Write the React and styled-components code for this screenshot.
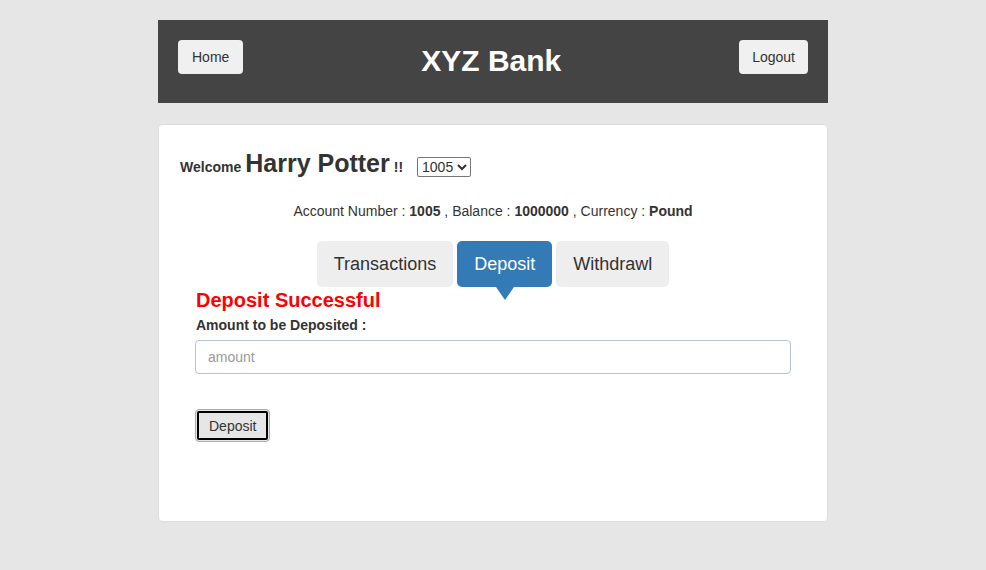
import React from 'react';
import styled, { createGlobalStyle } from 'styled-components';

const GlobalStyle = createGlobalStyle`
  body {
    margin: 0;
    background: #e6e6e6;
    font-family: "Liberation Sans", Arial, sans-serif;
    color: #333;
  }
`;

const Page = styled.div`
  width: 670px;
  margin: 20px auto 0;
  display: flex;
  flex-direction: column;
  gap: 21px;
`;

const Header = styled.header`
  background: #444;
  height: 83px;
  padding: 20px 20px 0;
  display: flex;
  align-items: flex-start;
  justify-content: space-between;
  box-sizing: border-box;
`;

const NavButton = styled.button`
  background: #f0f0f0;
  border: none;
  border-radius: 4px;
  height: 34px;
  padding: 0 ${p => p.$pad || 12}px;
  font-family: inherit;
  font-size: 14px;
  color: #333;
`;

const Title = styled.h1`
  margin: 0;
  color: #fff;
  font-size: 30px;
  line-height: 42px;
  font-weight: bold;
`;

const Card = styled.main`
  background: #fff;
  border: 1px solid #ddd;
  border-radius: 4px;
  height: 398px;
  box-sizing: border-box;
  padding: 24px 21px 0;
`;

const WelcomeRow = styled.div`
  display: flex;
  align-items: baseline;
  font-weight: bold;
  font-size: 14px;
  height: 30px;
`;

const UserName = styled.span`
  font-size: 25px;
  margin: 0 4px;
`;

const AccountSelect = styled.select`
  margin-left: 14px;
  font-family: inherit;
  font-size: 14px;
  height: 20px;
  border: 1px solid #767676;
  border-radius: 2px;
  background: #fff;
  color: #333;
  padding: 0;
`;

const AccountInfo = styled.p`
  text-align: center;
  margin: 22px 0 0;
  font-size: 14px;
  line-height: 20px;
`;

const Tabs = styled.nav`
  display: flex;
  justify-content: center;
  gap: 4px;
  margin-top: 20px;
`;

const Tab = styled.div`
  position: relative;
  height: 46px;
  padding: 0 17px;
  display: flex;
  align-items: center;
  font-size: 18px;
  border-radius: 5px;
  background: ${p => (p.$active ? '#337ab7' : '#eee')};
  color: ${p => (p.$active ? '#fff' : '#333')};

  ${p =>
    p.$active &&
    `&::after {
      content: '';
      position: absolute;
      left: 50%;
      top: 100%;
      margin-left: -9px;
      border-left: 9px solid transparent;
      border-right: 9px solid transparent;
      border-top: 13px solid #337ab7;
    }`}
`;

const Form = styled.form`
  margin: 0 15px;
  display: flex;
  flex-direction: column;
  align-items: flex-start;
`;

const Message = styled.h3`
  margin: 2px 0 0 1px;
  color: #f00;
  font-size: 20px;
  line-height: 22px;
  font-weight: bold;
`;

const Label = styled.label`
  margin: 4px 0 0 1px;
  font-size: 14px;
  font-weight: bold;
  line-height: 20px;
`;

const AmountInput = styled.input`
  margin-top: 5px;
  width: 100%;
  height: 34px;
  box-sizing: border-box;
  border: 1px solid #b4c6d8;
  border-radius: 4px;
  padding: 0 12px;
  font-family: inherit;
  font-size: 14px;
  color: #333;
  &::placeholder {
    color: #999;
  }
`;

const SubmitButton = styled.button`
  margin-top: 35px;
  height: 33px;
  padding: 0 13px;
  background: #e6e6e6;
  border: 1px solid #adadad;
  border-radius: 4px;
  outline: 2px solid #000;
  outline-offset: -4px;
  font-family: inherit;
  font-size: 14px;
  color: #333;
`;

export default function App() {
  return (
    <>
      <GlobalStyle />
      <Page>
        <Header>
          <NavButton $pad={14}>Home</NavButton>
          <Title>XYZ Bank</Title>
          <NavButton $pad={13}>Logout</NavButton>
        </Header>
        <Card>
          <WelcomeRow>
            Welcome <UserName>Harry Potter</UserName> !!
            <AccountSelect defaultValue="1005">
              <option>1005</option>
              <option>1004</option>
              <option>1006</option>
            </AccountSelect>
          </WelcomeRow>
          <AccountInfo>
            Account Number : <b>1005</b> , Balance : <b>1000000</b> , Currency : <b>Pound</b>
          </AccountInfo>
          <Tabs>
            <Tab>Transactions</Tab>
            <Tab $active>Deposit</Tab>
            <Tab>Withdrawl</Tab>
          </Tabs>
          <Form onSubmit={e => e.preventDefault()}>
            <Message>Deposit Successful</Message>
            <Label>Amount to be Deposited :</Label>
            <AmountInput type="number" placeholder="amount" />
            <SubmitButton type="submit">Deposit</SubmitButton>
          </Form>
        </Card>
      </Page>
    </>
  );
}
